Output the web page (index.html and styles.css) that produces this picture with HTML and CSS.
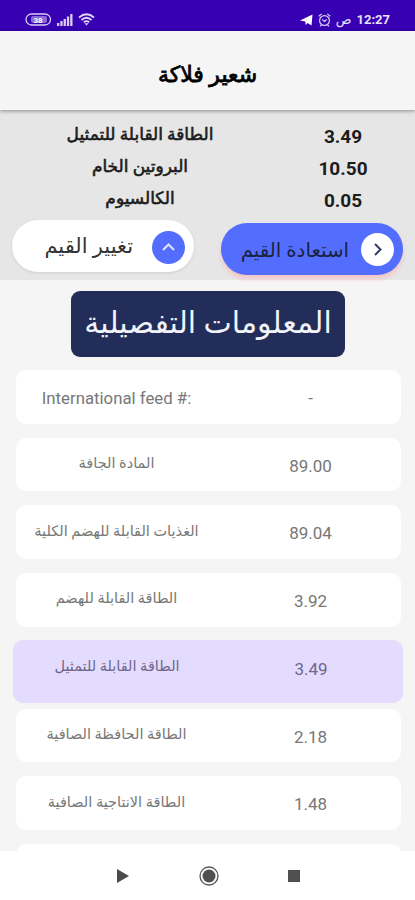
FILE: index.html
```
<!DOCTYPE html>
<html lang="ar">
<head>
    <meta charset="UTF-8">
    <meta name="viewport" content="width=device-width, initial-scale=1.0">
    <title>شعير فلاكة</title>
    <link rel="stylesheet" href="styles.css">
</head>
<body>
    <div class="status-bar">
        <div class="status-left">
            <svg class="battery" width="27" height="13" viewBox="0 0 27 13">
                <rect x="1" y="1" width="24.500" height="11" rx="5.500" fill="none" stroke="#d9cdf5" stroke-width="1.300"/>
                <rect x="6" y="3" width="16" height="7" rx="2" fill="#8a68d8"/>
                <text x="13" y="9.500" text-anchor="middle">38</text>
            </svg>
            <svg width="16" height="12" viewBox="0 0 16 12" fill="#d9cdf5">
                <rect x="0" y="9" width="2.300" height="3"/>
                <rect x="3.300" y="7" width="2.300" height="5"/>
                <rect x="6.600" y="5" width="2.300" height="7"/>
                <rect x="9.900" y="2.500" width="2.300" height="9.500"/>
                <rect x="13.200" y="0" width="2.300" height="12"/>
            </svg>
            <svg width="17" height="13" viewBox="0 0 17 13" fill="none" stroke="#e2d8f8" stroke-width="1.700">
                <path d="M1 4.500Q8.500-2 16 4.500M3.500 7Q8.500 2.500 13.500 7M5.800 9.300Q8.500 7 11.200 9.300"/>
                <path d="M8.500 12.500L6.500 10.300H10.500Z" fill="#e2d8f8" stroke="none"/>
            </svg>
        </div>
        <div class="status-right">
            <svg width="13" height="12" viewBox="0 0 13 12" fill="#fff">
                <path d="M0 6.500L12.500 0.500L11.500 11.500L7.500 9L5.700 11L5.300 7.500Z"/>
            </svg>
            <svg width="13" height="14" viewBox="0 0 13 14" fill="none" stroke="#d9cdf5" stroke-width="1.200">
                <circle cx="6.500" cy="7.500" r="4.900"/>
                <path d="M0.700 3.300L3.700 0.900M12.300 3.300L9.300 0.900M4.300 6.500L6.500 8.500L8.700 6.500M3.500 12L2 13.300M9.500 12L11 13.300"/>
            </svg>
            <span class="meridiem">ص</span>
            <span class="clock">12:27</span>
        </div>
    </div>

    <header class="app-header">
        <h1>شعير فلاكة</h1>
    </header>

    <section class="summary">
        <div class="summary-row">
            <span class="summary-label">الطاقة القابلة للتمثيل</span>
            <span class="summary-value">3.49</span>
        </div>
        <div class="summary-row">
            <span class="summary-label">البروتين الخام</span>
            <span class="summary-value">10.50</span>
        </div>
        <div class="summary-row">
            <span class="summary-label">الكالسيوم</span>
            <span class="summary-value">0.05</span>
        </div>
        <div class="actions">
            <button class="action change">
                <span class="action-text">تغيير القيم</span>
                <svg width="33" height="33" viewBox="0 0 33 33">
                    <circle cx="16.500" cy="16.500" r="16.500" fill="#536dfe"/>
                    <path d="M11 19L16.500 13.500L22 19" fill="none" stroke="#dfe5ff" stroke-width="2"/>
                </svg>
            </button>
            <button class="action restore">
                <span class="action-text">استعادة القيم</span>
                <svg width="33" height="33" viewBox="0 0 33 33">
                    <circle cx="16.500" cy="16.500" r="16.500" fill="#fff"/>
                    <path d="M14 11L19.500 16.500L14 22" fill="none" stroke="#333c66" stroke-width="2"/>
                </svg>
            </button>
        </div>
    </section>

    <main class="details">
        <h2><span>المعلومات التفصيلية</span></h2>
        <div class="card">
            <span class="card-label latin">International feed #:</span>
            <span class="card-value">-</span>
        </div>
        <div class="card">
            <span class="card-label">المادة الجافة</span>
            <span class="card-value">89.00</span>
        </div>
        <div class="card">
            <span class="card-label">الغذيات القابلة للهضم الكلية</span>
            <span class="card-value">89.04</span>
        </div>
        <div class="card">
            <span class="card-label">الطاقة القابلة للهضم</span>
            <span class="card-value">3.92</span>
        </div>
        <div class="card selected">
            <span class="card-label">الطاقة القابلة للتمثيل</span>
            <span class="card-value">3.49</span>
        </div>
        <div class="card">
            <span class="card-label">الطاقة الحافظة الصافية</span>
            <span class="card-value">2.18</span>
        </div>
        <div class="card">
            <span class="card-label">الطاقة الانتاجية الصافية</span>
            <span class="card-value">1.48</span>
        </div>
        <div class="card"></div>
    </main>

    <nav class="nav-bar">
        <svg width="12" height="14" viewBox="0 0 12 14" fill="#4a4a4a"><path d="M0 0L12 7L0 14Z"/></svg>
        <svg width="20" height="20" viewBox="0 0 20 20">
            <circle cx="10" cy="10" r="9" fill="none" stroke="#555" stroke-width="1.300"/>
            <circle cx="10" cy="10" r="6.500" fill="#505050"/>
        </svg>
        <svg width="12" height="12" viewBox="0 0 12 12" fill="#505050"><rect width="12" height="12"/></svg>
    </nav>
</body>
</html>
```
FILE: styles.css
```
* {
    box-sizing: border-box;
}
body {
    margin: 0;
    height: 900px;
    display: flex;
    flex-direction: column;
    overflow: hidden;
    background-color: #f5f5f5;
    font-family: Roboto, "DejaVu Sans", sans-serif;
}
svg {
    display: block;
    flex: none;
}
.status-bar {
    height: 31px;
    flex: none;
    display: flex;
    justify-content: space-between;
    align-items: center;
    padding: 8px 25px 0 25px;
    background-color: #3700b3;
    color: #e8e0fa;
}
.status-left,
.status-right {
    display: flex;
    align-items: center;
    gap: 5px;
}
.battery text {
    font-size: 8px;
    font-weight: bold;
    fill: #fff;
}
.meridiem {
    font-size: 13px;
    line-height: 16px;
}
.clock {
    font-size: 13px;
    font-weight: bold;
    line-height: 16px;
}
.app-header {
    height: 79px;
    flex: none;
    display: flex;
    justify-content: center;
    align-items: center;
    padding-top: 8px;
    position: relative;
    box-shadow: 0 1px 4px rgba(0,0,0,0.4);
    background-color: #f5f5f5;
}
h1 {
    margin: 0;
    font-size: 22px;
    line-height: 30px;
    font-weight: normal;
    -webkit-text-stroke: 0.8px #000;
}
.summary {
    height: 170px;
    flex: none;
    padding-top: 10px;
    background-color: #e6e6e6;
}
.summary-row {
    display: grid;
    grid-template-columns: 280px 126px;
    height: 32px;
    align-items: center;
    text-align: center;
    white-space: nowrap;
    color: #1c1c1c;
}
.summary-label {
    font-size: 17px;
    line-height: 26px;
    padding-bottom: 4px;
    -webkit-text-stroke: 0.6px #1c1c1c;
}
.summary-value {
    font-size: 19px;
    font-weight: bold;
    line-height: 26px;
    padding-top: 2px;
}
.actions {
    display: flex;
    justify-content: space-between;
    align-items: flex-start;
    padding: 4px 12px 0;
}
.action {
    width: 182px;
    height: 52px;
    display: flex;
    justify-content: flex-end;
    align-items: center;
    gap: 19px;
    padding: 0 9px;
    border: none;
    border-radius: 26px;
    font-family: inherit;
    white-space: nowrap;
}
.change {
    font-size: 21px;
    background-color: #fff;
    color: #333;
    box-shadow: 0 1px 3px rgba(0,0,0,0.1);
}
.change svg {
    margin-top: 2px;
}
.restore {
    gap: 12px;
    margin-top: 3px;
    font-size: 19.800px;
    background-color: #536dfe;
    color: #1b2340;
    box-shadow: 0 4px 4px #f5c6c8;
}
.restore .action-text {
    padding-top: 3px;
}
.details {
    flex: 1;
    min-height: 0;
    overflow: hidden;
    display: flex;
    flex-direction: column;
    align-items: center;
    padding: 11px 0 0 1px;
}
h2 {
    margin: 0 0 13px;
    flex: none;
    width: 274px;
    height: 66px;
    border-radius: 9px;
    display: flex;
    justify-content: center;
    align-items: center;
    font-size: 30px;
    font-weight: normal;
    line-height: 40px;
    padding-bottom: 2px;
    white-space: nowrap;
    background-color: #222d59;
    color: #f2f3f8;
}
.card {
    width: 385px;
    height: 53.700px;
    flex: none;
    margin-bottom: 14px;
    display: grid;
    grid-template-columns: 202px 186px;
    align-items: center;
    text-align: center;
    white-space: nowrap;
    border-radius: 10px;
    background-color: #fff;
    color: #777;
}
.card-label {
    font-size: 14.500px;
    line-height: 20px;
    padding-bottom: 1px;
}
.card-label.latin {
    font-size: 16.800px;
    padding: 2px 0 0;
}
.card-value {
    font-size: 17px;
    line-height: 20px;
    padding-top: 2px;
}
.selected {
    width: 390px;
    height: 63px;
    margin: -1px 0 6px;
    padding: 0 3px 7px;
    background-color: #e3dcff;
    color: #70668c;
}
.nav-bar {
    height: 49px;
    flex: none;
    display: flex;
    justify-content: space-between;
    align-items: center;
    padding: 0 115px 0 117px;
    background-color: #fff;
}
```
